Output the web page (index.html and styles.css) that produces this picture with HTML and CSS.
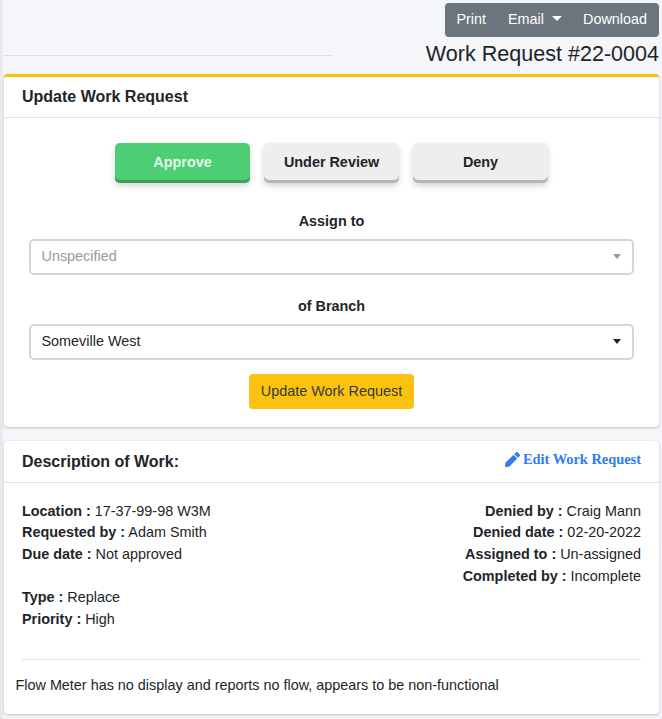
FILE: index.html
```html
<!DOCTYPE html>
<html lang="en">
<head>
<meta charset="utf-8">
<title>Work Request</title>
<link rel="stylesheet" href="styles.css">
</head>
<body>
<div class="page">
  <header class="top">
    <div class="top-left"><hr class="rule"></div>
    <div class="top-right">
      <div class="toolbar">
        <span class="tool">Print</span>
        <span class="tool">Email<i class="caret"></i></span>
        <span class="tool">Download</span>
      </div>
      <h1 class="title">Work Request #22-0004</h1>
    </div>
  </header>

  <section class="card card-warning">
    <div class="card-head"><h2 class="card-title">Update Work Request</h2></div>
    <div class="card-body update-body">
      <div class="status-row">
        <button class="status status-on">Approve</button>
        <button class="status">Under Review</button>
        <button class="status">Deny</button>
      </div>
      <label class="field-label">Assign to</label>
      <div class="select placeholder"><span>Unspecified</span><i class="arrow"></i></div>
      <label class="field-label second">of Branch</label>
      <div class="select"><span>Someville West</span><i class="arrow"></i></div>
      <button class="submit">Update Work Request</button>
    </div>
  </section>

  <section class="card">
    <div class="card-head head-split">
      <h2 class="card-title">Description of Work:</h2>
      <a class="edit-link">
        <svg class="pencil" viewBox="0 0 512 512" aria-hidden="true"><path d="M290.7 93.2l128 128-278 278-114.1 12.6C11.4 513.500-1.600 500.600.1 485.300l12.700-114.200 277.900-277.900zm207.200-19.100l-60.100-60.100c-18.700-18.700-49.100-18.700-67.900 0l-56.600 56.600 128 128 56.600-56.600c18.800-18.800 18.800-49.200 0-67.900z"/></svg>Edit Work Request
      </a>
    </div>
    <div class="card-body detail-body">
      <div class="detail-cols">
        <div class="col-left">
          <p class="line"><b>Location :</b> 17-37-99-98 W3M</p>
          <p class="line"><b>Requested by :</b> Adam Smith</p>
          <p class="line"><b>Due date :</b> Not approved</p>
          <p class="line gap"><b>Type :</b> Replace</p>
          <p class="line"><b>Priority :</b> High</p>
        </div>
        <div class="col-right">
          <p class="line"><b>Denied by :</b> Craig Mann</p>
          <p class="line"><b>Denied date :</b> 02-20-2022</p>
          <p class="line"><b>Assigned to :</b> Un-assigned</p>
          <p class="line"><b>Completed by :</b> Incomplete</p>
        </div>
      </div>
      <hr class="divider">
      <p class="desc">Flow Meter has no display and reports no flow, appears to be non-functional</p>
    </div>
  </section>
</div>
</body>
</html>
```
FILE: styles.css
```css
* { box-sizing: border-box; }
html, body { margin: 0; padding: 0; }
body {
  background: #f4f6f9;
  color: #212529;
  font-family: "Liberation Sans", Arial, sans-serif;
  font-size: 14.4px;
  line-height: 1.5;
  height: 719px;
  overflow: hidden;
}
.page {
  padding: 3px 3px 0 4px;
  height: 719px;
  box-shadow: inset 3px 0 3px -1px rgba(0,0,0,.07);
}
.top { display: flex; height: 71px; }
.top-left { flex: 0 0 328px; padding-top: 52px; }
.rule { margin: 0; border: 0; border-top: 1px solid #dee0e4; }
.top-right { flex: 1; display: flex; flex-direction: column; align-items: flex-end; }
.toolbar {
  display: flex;
  background: #6c757d;
  border-radius: 4px;
  height: 34px;
  padding: 0 1px 0 .6px;
  color: #fff;
}
.tool { padding: 5px 11px; font-size: 14.4px; line-height: 22px; }
.caret {
  display: inline-block;
  margin: 0 -1px 0 8px;
  vertical-align: 3px;
  border-top: 5px solid #fff;
  border-left: 5px solid transparent;
  border-right: 5px solid transparent;
}
.title { margin: 2px 0 0; font-size: 21.55px; font-weight: 400; line-height: 30px; white-space: nowrap; }
.card {
  background: #fff;
  border-radius: 4px;
  box-shadow: 0 0 1px rgba(0,0,0,.125), 0 1px 3px rgba(0,0,0,.2);
  margin-bottom: 14px;
}
.card-warning { border-top: 3px solid #fbc20f; }
.card-head { padding: 12px 18px; border-bottom: 1px solid #dfe1e4; height: 42px; }
.card-warning .card-head { height: 41px; padding-top: 8px; }
.head-split { display: flex; justify-content: space-between; align-items: center; padding: 0 18px; }
.card-title { margin: 0; font-size: 16px; font-weight: 700; line-height: 24px; }
.update-body { padding: 25px 25px 18px; display: flex; flex-direction: column; align-items: center; }
.status-row { display: flex; gap: 14px; margin-bottom: 27px; }
.status {
  width: 135px;
  height: 40px;
  padding: 0 0 2px;
  border: 0;
  border-radius: 5px;
  background: #eeeeee;
  color: #212529;
  font: 700 14.4px "Liberation Sans", Arial, sans-serif;
  box-shadow: inset 0 -3px 0 #b5b5b5, 0 3px 6px rgba(0,0,0,.16);
}
.status-on { background: #4dce74; color: #e4f8ea; box-shadow: inset 0 -3px 0 #3d9f5a, 0 3px 6px rgba(0,0,0,.16); }
.field-label { font-weight: 700; line-height: 22px; margin-bottom: 7px; }
.field-label.second { margin-top: 20px; }
.select {
  width: 100%;
  height: 36px;
  border: 2px solid #d3d7dc;
  border-radius: 5px;
  padding: 0 10px 1px 10.5px;
  display: flex;
  align-items: center;
  justify-content: space-between;
}
.placeholder { color: #999; }
.arrow { border-top: 5px solid #212529; border-left: 4px solid transparent; border-right: 4px solid transparent; margin-right: 1px; }
.placeholder .arrow { border-top-color: #999; }
.submit {
  margin-top: 14px;
  height: 35px;
  padding: 0 12px 1px;
  border: 0;
  border-radius: 4px;
  background: #fbc20f;
  color: #343a40;
  font: 400 14.4px "Liberation Sans", Arial, sans-serif;
}
.edit-link {
  color: #2f7bf6;
  font: 700 14.4px "Liberation Serif", "Times New Roman", serif;
  display: flex;
  align-items: center;
  padding-bottom: 4px;
}
.pencil { width: 15px; height: 15px; fill: currentColor; margin-right: 3px; }
.detail-body { padding: 17.85px 18px 0 18px; }
.detail-cols { display: flex; justify-content: space-between; }
.col-right { text-align: right; }
.line { margin: 0; line-height: 21.6px; }
.line.gap { margin-top: 21.4px; }
.divider { margin: 29px 0 14px; border: 0; border-top: 1px solid #dfe1e4; }
.desc { margin: 0 0 0 -6.5px; line-height: 22px; padding-bottom: 18px; }
```
